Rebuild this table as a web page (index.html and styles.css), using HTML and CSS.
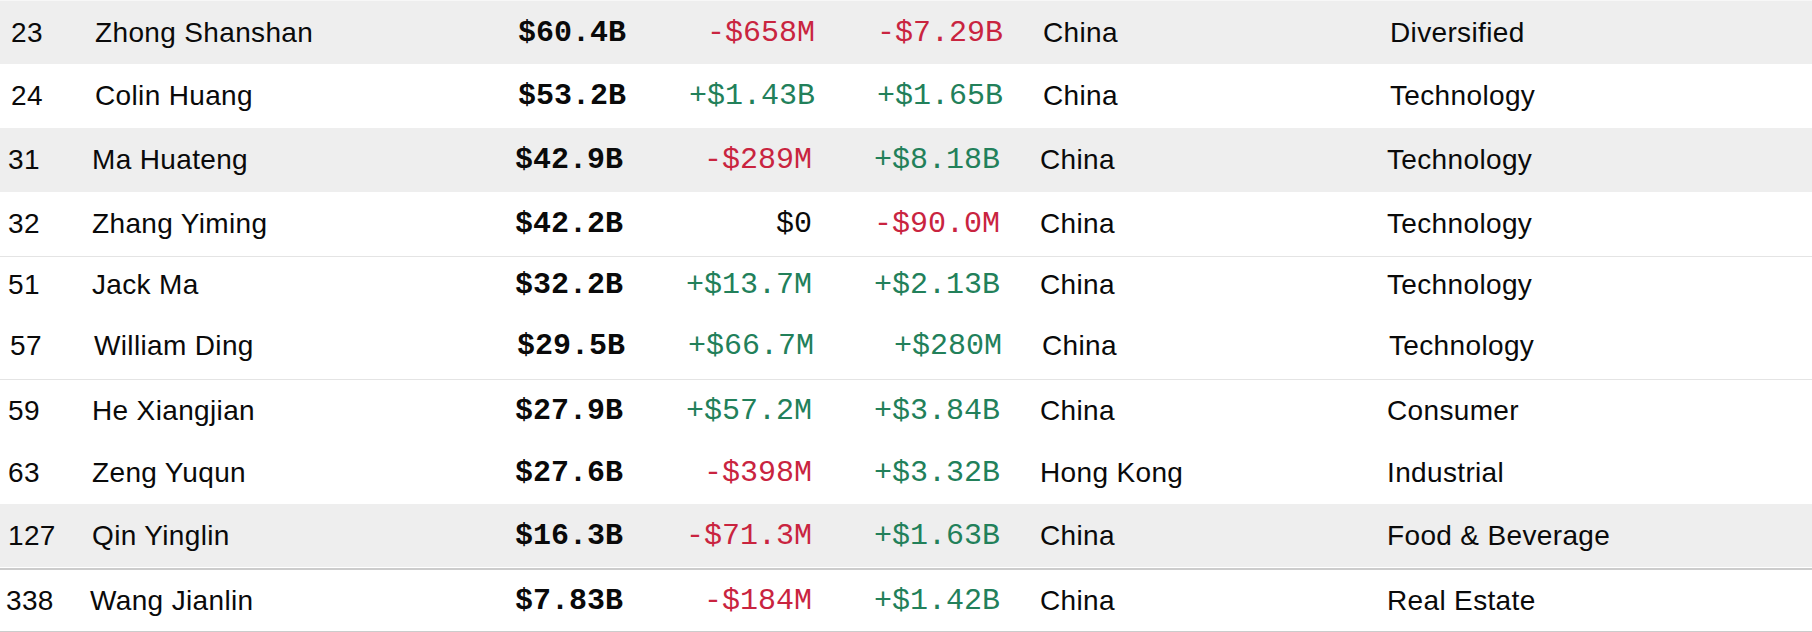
FILE: index.html
```html
<!DOCTYPE html>
<html lang="en">
<head>
<meta charset="utf-8">
<title>Billionaires</title>
<link rel="stylesheet" href="styles.css">
</head>
<body>
<div class="table">
  <div class="row shade h64 top shift3">
    <div class="rank">23</div><div class="name">Zhong Shanshan</div><div class="worth">$60.4B</div>
    <div class="chg neg">-$658M</div><div class="chg neg">-$7.29B</div>
    <div class="country">China</div><div class="industry">Diversified</div>
  </div>
  <div class="row h64 shift3">
    <div class="rank">24</div><div class="name">Colin Huang</div><div class="worth">$53.2B</div>
    <div class="chg pos">+$1.43B</div><div class="chg pos">+$1.65B</div>
    <div class="country">China</div><div class="industry">Technology</div>
  </div>
  <div class="row shade h64">
    <div class="rank">31</div><div class="name">Ma Huateng</div><div class="worth">$42.9B</div>
    <div class="chg neg">-$289M</div><div class="chg pos">+$8.18B</div>
    <div class="country">China</div><div class="industry">Technology</div>
  </div>
  <div class="row h64 line-light">
    <div class="rank">32</div><div class="name">Zhang Yiming</div><div class="worth">$42.2B</div>
    <div class="chg">$0</div><div class="chg neg">-$90.0M</div>
    <div class="country">China</div><div class="industry">Technology</div>
  </div>
  <div class="row h56">
    <div class="rank">51</div><div class="name">Jack Ma</div><div class="worth">$32.2B</div>
    <div class="chg pos">+$13.7M</div><div class="chg pos">+$2.13B</div>
    <div class="country">China</div><div class="industry">Technology</div>
  </div>
  <div class="row h66 line-light shift2">
    <div class="rank">57</div><div class="name">William Ding</div><div class="worth">$29.5B</div>
    <div class="chg pos">+$66.7M</div><div class="chg pos">+$280M</div>
    <div class="country">China</div><div class="industry">Technology</div>
  </div>
  <div class="row h61">
    <div class="rank">59</div><div class="name">He Xiangjian</div><div class="worth">$27.9B</div>
    <div class="chg pos">+$57.2M</div><div class="chg pos">+$3.84B</div>
    <div class="country">China</div><div class="industry">Consumer</div>
  </div>
  <div class="row h63">
    <div class="rank">63</div><div class="name">Zeng Yuqun</div><div class="worth">$27.6B</div>
    <div class="chg neg">-$398M</div><div class="chg pos">+$3.32B</div>
    <div class="country">Hong Kong</div><div class="industry">Industrial</div>
  </div>
  <div class="row shade h63 line-strong">
    <div class="rank">127</div><div class="name">Qin Yinglin</div><div class="worth">$16.3B</div>
    <div class="chg neg">-$71.3M</div><div class="chg pos">+$1.63B</div>
    <div class="country">China</div><div class="industry">Food &amp; Beverage</div>
  </div>
  <div class="row h60 line-bottom nudge-left">
    <div class="rank">338</div><div class="name">Wang Jianlin</div><div class="worth">$7.83B</div>
    <div class="chg neg">-$184M</div><div class="chg pos">+$1.42B</div>
    <div class="country">China</div><div class="industry">Real Estate</div>
  </div>
</div>
</body>
</html>
```
FILE: styles.css
```css
* { box-sizing: border-box; }
html, body { margin: 0; padding: 0; background: #ffffff; }
body {
  width: 1812px;
  font-family: "Liberation Sans", Arial, sans-serif;
  color: #0a0a0a;
}
.table { display: flex; flex-direction: column; }
.row {
  display: grid;
  grid-template-columns: 92px 380px 151px 189px 188px 387px 1fr;
  align-items: center;
  background: #ffffff;
}
.row.shade { background: #eeeeee; }
.row.top { border-top: 1px solid #f7f7f7; }
.h64 { height: 64px; }
.h56 { height: 56px; }
.h66 { height: 66px; }
.h61 { height: 61px; }
.h63 { height: 63px; }
.h60 { height: 60px; }
.line-light { border-bottom: 1px solid #e4e4e4; height: 65px; }
.h66.line-light { height: 67px; }
.line-strong { box-shadow: 0 1px 0 #ffffff, 0 3px 0 #cccccc; margin-bottom: 4px; }
.line-bottom { border-bottom: 2px solid #cccccc; height: 62px; }
.shift3 { padding-left: 3px; }
.shift2 { padding-left: 2px; }
.nudge-left .rank, .nudge-left .name { margin-left: -2px; }

.rank, .name, .country, .industry {
  font-size: 28px;
  letter-spacing: 0.35px;
  white-space: nowrap;
}
.rank { padding-left: 8px; }
.country { padding-left: 40px; }
.worth, .chg {
  font-family: "Liberation Mono", "Courier New", monospace;
  font-size: 30px;
  text-align: right;
  white-space: nowrap;
}
.worth { font-weight: bold; color: #0a0a0a; }
.chg { color: #0a0a0a; }
.chg.neg { color: #c9243f; }
.chg.pos { color: #22805a; }
```
